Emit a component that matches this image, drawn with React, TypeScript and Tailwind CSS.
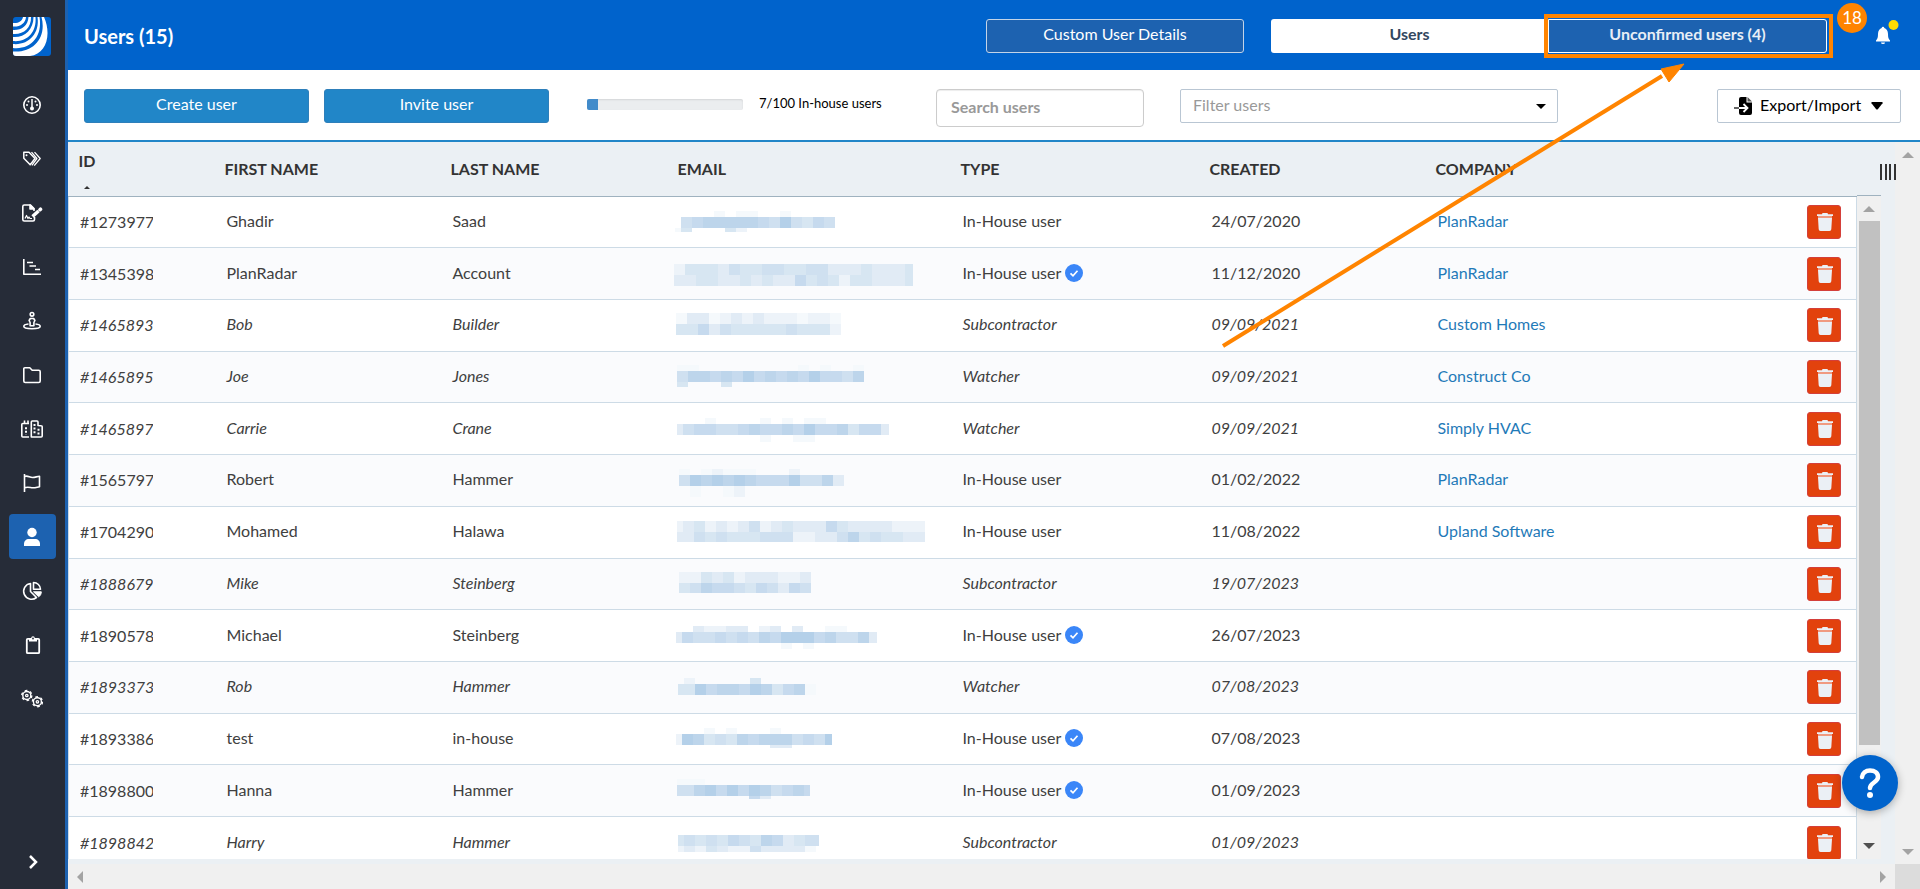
import type { ReactNode } from "react"

interface Strip {
  y: number
  h: number
  cells: string
}

interface Mask {
  x: number
  first: number
  width: number
  strips: Strip[]
}

interface User {
  id: string
  firstName: string
  lastName: string
  type: string
  verified?: boolean
  created: string
  company?: string
  mask: Mask
}

// shades used for the masked email addresses
const shades: Record<string, string> = {
  a: "#f5f9fc",
  b: "#edf3f9",
  c: "#e1ebf5",
  d: "#d7e6f2",
  e: "#cfe0f0",
  f: "#c6daee",
  g: "#bdd5eb",
  h: "#b4d0e9",
}

const mask = (x: number, first: number, width: number, ...rows: [number, number, string][]): Mask => ({
  x,
  first,
  width,
  strips: rows.map(([y, h, cells]) => ({ y, h, cells })),
})

const users: User[] = [
  {
    id: "#1273977", firstName: "Ghadir", lastName: "Saad", type: "In-House user", created: "24/07/2020", company: "PlanRadar",
    mask: mask(1, 6, 160, [14, 6, "....a.aa..a"], [20, 11, ".efgggggfehedfe"], [31, 4, "ad...db"]),
  },
  {
    id: "#1345398", firstName: "PlanRadar", lastName: "Account", type: "In-House user", verified: true, created: "11/12/2020", company: "PlanRadar",
    mask: mask(0, 11, 239, [15, 11, "bdddceddeeddeecccdcccd"], [26, 11, "ccddccdcdccfdedbddcccd"]),
  },
  {
    id: "#1465893", firstName: "Bob", lastName: "Builder", type: "Subcontractor", created: "09/09/2021", company: "Custom Homes",
    mask: mask(2, 11, 165, [13, 11, "accabcbcbbbabba"], [24, 11, "ddfcedddddedddb"]),
  },
  {
    id: "#1465895", firstName: "Joe", lastName: "Jones", type: "Watcher", created: "09/09/2021", company: "Construct Co",
    mask: mask(3, 11, 187, [13, 6, "aa.........a.a..a"], [19, 11, "eggfgfhfgfgfhffeg"], [30, 5, "d...d"]),
  },
  {
    id: "#1465897", firstName: "Carrie", lastName: "Crane", type: "Watcher", created: "09/09/2021", company: "Simply HVAC",
    mask: mask(3, 6, 212, [14, 6, "...a....a.a.aa"], [20, 11, "ceffeefgffgfhffgdffc"], [31, 7, "........a..aa"]),
  },
  {
    id: "#1565797", firstName: "Robert", lastName: "Hammer", type: "In-House user", created: "01/02/2022", company: "PlanRadar",
    mask: mask(5, 11, 165, [14, 6, "a.abaaa...b"], [20, 11, "ehghghgfffheegc"], [31, 11, ".a..ab"]),
  },
  {
    id: "#1704290", firstName: "Mohamed", lastName: "Halawa", type: "In-House user", created: "11/08/2022", company: "Upland Software",
    mask: mask(3, 6, 248, [14, 11, "bcdbcbcebcdcccfdccccbbb"], [25, 10, "ccededddeeebbccegdeddcc"]),
  },
  {
    id: "#1888679", firstName: "Mike", lastName: "Steinberg", type: "Subcontractor", created: "19/07/2023",
    mask: mask(5, 11, 132, [13, 11, "bbdcdbcccbbc"], [24, 10, "degffedfecfe"]),
  },
  {
    id: "#1890578", firstName: "Michael", lastName: "Steinberg", type: "In-House user", verified: true, created: "26/07/2023",
    mask: mask(2, 6, 201, [15, 6, "..cbbcc.bc.c..aa"], [21, 11, "cfeefefegfhhhfgeegc"], [32, 6, "..........a.a"]),
  },
  {
    id: "#1893373", firstName: "Rob", lastName: "Hammer", type: "Watcher", created: "07/08/2023",
    mask: mask(4, 6, 138, [16, 6, ".b.....d"], [22, 11, "ddhfggfhgdfga"]),
  },
  {
    id: "#1893386", firstName: "test", lastName: "in-house", type: "In-House user", verified: true, created: "07/08/2023",
    mask: mask(2, 6, 156, [14, 6, "...a.a...a"], [20, 11, "bhgdedgfgggefeh"], [31, 3, ".........cc"]),
  },
  {
    id: "#1898800", firstName: "Hanna", lastName: "Hammer", type: "In-House user", verified: true, created: "01/09/2023",
    mask: mask(3, 6, 133, [13, 6, "aaa"], [19, 11, "eeghfhfhgefgf"], [30, 3, ".......fc"]),
  },
  {
    id: "#1898842", firstName: "Harry", lastName: "Hammer", type: "Subcontractor", created: "01/09/2023",
    mask: mask(4, 6, 141, [17, 11, "dededfedgfcdee"], [28, 6, "bcbdcbbecccca"]),
  },
]

function MaskedEmail({ mask }: { mask: Mask }) {
  return (
    <svg width={mask.width + mask.x} height="50" className="block" shapeRendering="crispEdges" aria-label="Hidden email">
      {mask.strips.map((strip) =>
        strip.cells.split("").map((c, i) =>
          c === "." ? null : (
            <rect
              key={`${strip.y}-${i}`}
              x={mask.x + (i === 0 ? 0 : mask.first + (i - 1) * 11)}
              y={strip.y}
              width={i === 0 ? mask.first : 11}
              height={strip.h}
              fill={shades[c]}
            />
          ),
        ),
      )}
    </svg>
  )
}

function Logo() {
  return (
    <svg width="38" height="39" viewBox="0 0 38 39" aria-hidden="true">
      <defs>
        <clipPath id="logo-clip">
          <rect width="38" height="39" rx="3" />
        </clipPath>
      </defs>
      <g clipPath="url(#logo-clip)">
        <rect width="38" height="39" fill="#0063cc" />
        <g fill="#fff">
          <path d="M0 6C5 6.500 9 4.500 10 0H13C12.500 6.500 7 10 0 9.500z" />
          <path d="M0 13C8 13.500 15 9 15.500 0H18C18.500 11 10 18 0 17z" />
          <path d="M0 20C11 21 20.500 13 20.500 0H22.500C24 16 13 25.500 0 24z" />
          <path d="M0 27C15 28.500 27 17 24.500 0H26.500C30 20 17 33 0 31z" />
          <path d="M0 34.500C20 36 34 21 28.500 0H31C39 18 33 37 17 39H0z" />
        </g>
      </g>
    </svg>
  )
}

function NavIcon({ children }: { children: ReactNode }) {
  return (
    <svg width="22" height="20" viewBox="0 0 22 20" fill="none" stroke="#fff" strokeWidth="1.600" strokeLinejoin="round" aria-hidden="true">
      {children}
    </svg>
  )
}

const navItems: { label: string; icon: ReactNode; active?: boolean }[] = [
  {
    label: "Dashboard",
    icon: (
      <>
        <circle cx="11" cy="10" r="8.200" />
        <path d="M11 4v8" strokeWidth="1.500" />
        <circle cx="11" cy="13.500" r="2" fill="#fff" stroke="none" />
        <g fill="#fff" stroke="none">
          <circle cx="7.500" cy="6.500" r="1" />
          <circle cx="14.500" cy="6.500" r="1" />
          <circle cx="6" cy="10" r="1" />
          <circle cx="16" cy="10" r="1" />
        </g>
      </>
    ),
  },
  {
    label: "Tickets",
    icon: (
      <>
        <path d="M2.800 3.300h5.200l6 6.200-4.800 6.300-6.400-6.500z" strokeWidth="1.500" />
        <path d="M10.500 3.100l5.400 6.400-5 6.900M13.500 3.100l5.700 6.400-6 7.200" strokeWidth="1.300" />
        <circle cx="5.500" cy="6.200" r="1" fill="#fff" stroke="none" />
      </>
    ),
  },
  {
    label: "Forms",
    icon: (
      <>
        <path d="M13.500 14v2.500a1.500 1.500 0 0 1-1.500 1.500H3.300a1.500 1.500 0 0 1-1.500-1.500v-13A1.500 1.500 0 0 1 3.300 2H9.500l3.500 3.500V8" />
        <path d="M9 2v4h4z" fill="#fff" />
        <path d="M4 15.500l1.500-3 1.500 3 1-1.500 1 1.500h2" strokeWidth="1.200" />
        <path d="M11.500 13.500l6-5.500" strokeWidth="3.400" />
        <path d="M19 6.700l.5-.5" strokeWidth="3.600" strokeLinecap="round" />
      </>
    ),
  },
  {
    label: "Schedule",
    icon: (
      <path d="M2.800 2v15.200h17.200M6 5.500h6M8.500 9h6.500M14 12.500h5" />
    ),
  },
  {
    label: "Site view",
    icon: (
      <>
        <circle cx="11" cy="3.300" r="1.800" />
        <path d="M9.300 7.500h3.400l1.200 2-1 2v3.300H9.100v-3.300l-1-2z" />
        <path d="M7.500 13C4.500 13.300 2.800 14.200 2.800 15.300c0 1.500 3.700 2.400 8.200 2.400s8.200-.9 8.200-2.400c0-1.100-1.700-2-4.700-2.300" />
      </>
    ),
  },
  {
    label: "Documents",
    icon: (
      <path d="M2.800 3.800a1 1 0 0 1 1-1h5l2.400 2.400h6.500a1.500 1.500 0 0 1 1.500 1.500v9.300a1.500 1.500 0 0 1-1.500 1.500H4.300a1.500 1.500 0 0 1-1.500-1.500z" />
    ),
  },
  {
    label: "Projects",
    icon: (
      <>
        <path d="M8 4.500H1.800a1 1 0 0 0-1 1v11.500a1 1 0 0 0 1 1H8M3.500 5V1.500M7 5V1.500" />
        <path d="M10.300 18V3a1 1 0 0 1 1-1h4.700a1 1 0 0 1 1 1v3.500l3.200.3a1 1 0 0 1 1 1v9.200a1 1 0 0 1-1 1z" />
        <path d="M5 8.200v7.500M13.500 5v10.700M17.500 9.800v6" strokeWidth="2" strokeDasharray="2 1.600" />
      </>
    ),
  },
  {
    label: "Milestones",
    icon: (
      <path d="M3.500 1v18M3.500 3.500c3-1.500 5 1 8 1s4.500-1.200 7-1.200v10.500c-2.500.4-4.500 1.200-7 1s-5-1.300-8 0" />
    ),
  },
  {
    label: "Users",
    active: true,
    icon: (
      <>
        <circle cx="11" cy="5.500" r="4.700" fill="#fff" stroke="none" />
        <path d="M3 19v-2c0-3 2-5 5-5h6c3 0 5 2 5 5v2z" fill="#fff" stroke="none" />
      </>
    ),
  },
  {
    label: "Statistics",
    icon: (
      <>
        <path d="M9.500 2.500A7.900 7.900 0 1 0 15.500 16.500L9.500 10.500z" />
        <path d="M12.500 1.500v6.800h7c0-3.800-3.200-6.800-7-6.800z" />
        <path d="M12.500 10.800h7.800c0 2.200-1 4-2.600 5z" fill="#fff" strokeWidth="1" />
      </>
    ),
  },
  {
    label: "Templates",
    icon: (
      <>
        <rect x="5.800" y="3.800" width="12.400" height="14.400" rx="1" strokeWidth="1.800" />
        <path d="M8 6.500V3h2.200a1.800 1.800 0 0 1 3.600 0H16v3.500z" fill="#fff" stroke="none" />
        <circle cx="12" cy="3.500" r="0.900" fill="#262c38" stroke="none" />
      </>
    ),
  },
  {
    label: "Settings",
    icon: (
      <>
        <circle cx="5.800" cy="6.500" r="4" strokeWidth="1.400" />
        <circle cx="5.800" cy="6.500" r="5" strokeWidth="1.400" strokeDasharray="2.600 2.630" />
        <circle cx="5.800" cy="6.500" r="1.200" strokeWidth="1.300" />
        <circle cx="16.400" cy="12.800" r="4" strokeWidth="1.400" />
        <circle cx="16.400" cy="12.800" r="5" strokeWidth="1.400" strokeDasharray="2.600 2.630" />
        <circle cx="16.400" cy="12.800" r="1.200" strokeWidth="1.300" />
      </>
    ),
  },
]

function Sidebar() {
  return (
    <nav className="flex w-[68px] shrink-0 flex-col items-center border-r-[3px] border-[#1d62b0] bg-[#262c38] pt-[17px] pb-3">
      <a href="#home" aria-label="Home" className="mr-[2px] mb-[26px]">
        <Logo />
      </a>
      <div className="flex flex-col gap-[9px]">
        {navItems.map((item) => (
          <a
            key={item.label}
            href={`#${item.label}`}
            aria-label={item.label}
            className={`flex h-[45px] w-[47px] items-center justify-center rounded-[4px] pr-[2px] ${item.active ? "bg-[#1d62b0]" : ""}`}
          >
            <NavIcon>{item.icon}</NavIcon>
          </a>
        ))}
      </div>
      <button type="button" aria-label="Expand menu" className="mt-auto flex h-[30px] w-[47px] items-center justify-center">
        <svg width="10" height="16" viewBox="0 0 10 16" fill="none" stroke="#fff" strokeWidth="2.500">
          <path d="M2 2l6 6-6 6" />
        </svg>
      </button>
    </nav>
  )
}

function Header() {
  return (
    <header className="flex h-[70px] shrink-0 items-start bg-[#0063cc] pt-[19px] pr-[21px] pl-4 text-white">
      <h1 className="text-[20px] leading-[34px] font-bold">Users (15)</h1>
      <button type="button" className="ml-auto h-[34px] w-[258px] rounded-[3px] border border-[#c3d4e8] bg-[#1d62b0] pb-1">
        Custom User Details
      </button>
      <div className="ml-[27px] flex">
        <button type="button" className="h-[34px] w-[277px] rounded-l-[3px] bg-white pb-1 font-bold text-[#33475f]">
          Users
        </button>
        <div className="relative">
          <button type="button" className="h-[34px] w-[279px] rounded-r-[3px] border border-white bg-[#1d62b0] pb-1 font-bold text-[#e8eef6]">
            Unconfirmed users (4)
          </button>
          <div className="pointer-events-none absolute -inset-y-[5px] -right-[6px] -left-1 border-4 border-[#ff8400]" />
        </div>
      </div>
      <span className="-mt-4 ml-[10px] flex size-[30px] items-center justify-center rounded-full bg-[#ff8400] text-[17px]">18</span>
      <button type="button" aria-label="Notifications" className="mt-[1px] ml-2">
        <svg width="24" height="26" viewBox="0 0 24 26" fill="none">
          <path d="M1 20.500c1.500-1.700 2-3 2-6.500 0-3.500 1.700-5.500 3.700-6a1.300 1.300 0 0 1 2.600 0c2 .5 3.700 2.500 3.700 6 0 3.500.5 4.800 2 6.500v1H1z" fill="#fff" />
          <path d="M6 22.500h4a2 1.500 0 0 1-4 0z" fill="#fff" />
          <circle cx="18.500" cy="5" r="5" fill="#ffdc00" />
        </svg>
      </button>
    </header>
  )
}

function Toolbar() {
  return (
    <div className="flex h-[72px] shrink-0 items-start border-b-2 border-[#2186c8] bg-white pt-[19px] pr-[19px] pl-4">
      <button type="button" className="h-[34px] w-[225px] rounded-[3px] border border-[#2e7fba] bg-[#2186c8] pb-1 text-white">
        Create user
      </button>
      <button type="button" className="ml-[15px] h-[34px] w-[225px] rounded-[3px] border border-[#2e7fba] bg-[#2186c8] pb-1 text-white">
        Invite user
      </button>
      <div className="mt-[10px] ml-[38px] h-[11px] w-[156px] overflow-hidden rounded-[2px] bg-[#ebedef] shadow-[inset_0_1px_2px_rgba(0,0,0,0.1)]">
        <div className="h-full bg-[#428bca]" style={{ width: "7%" }} />
      </div>
      <span className="mt-1 ml-4 w-[177px] text-[13px] leading-5 text-black">7/100 In-house users</span>
      <input
        type="text"
        aria-label="Search users"
        placeholder="Search users"
        className="h-[38px] w-[208px] rounded-[4px] border border-[#ccc] bg-white px-[14px] pb-1 font-bold shadow-[inset_0_1px_1px_rgba(0,0,0,0.075)] placeholder:text-[#999]"
      />
      <div className="relative ml-9">
        <select aria-label="Filter users" className="h-[34px] w-[378px] appearance-none rounded-[2px] border border-[#b9c6d3] bg-white pr-8 pb-[2px] pl-3 text-[#999]">
          <option>Filter users</option>
        </select>
        <svg width="10" height="5" viewBox="0 0 10 5" className="pointer-events-none absolute top-[15px] right-3">
          <path d="M0 0h10L5 5z" fill="#000" />
        </svg>
      </div>
      <button type="button" className="ml-auto flex h-[34px] w-[184px] items-center rounded-[2px] border border-[#b9c6d3] bg-white pl-4 text-black">
        <svg width="19" height="20" viewBox="0 0 19 20" aria-hidden="true">
          <path d="M7 1h5.500v5.500H18V17a2 2 0 0 1-2 2H7a2 2 0 0 1-2-2V3a2 2 0 0 1 2-2z" fill="#000" />
          <path d="M13.500 1L18 5.500h-4.500z" fill="#555" />
          <path d="M0 12h5" stroke="#333" strokeWidth="1.500" />
          <path d="M5 12h8M9.500 8l4 4-4 4" fill="none" stroke="#fff" strokeWidth="1.800" />
        </svg>
        <span className="mr-[10px] ml-[7px] pb-[2px]">Export/Import</span>
        <svg width="12" height="8" viewBox="0 0 12 8" aria-hidden="true">
          <path d="M1 0h10q1 0 .5 1.200L7 7q-1 1-2 0L.5 1.200Q0 0 1 0z" fill="#000" />
        </svg>
      </button>
    </div>
  )
}

function VerifiedBadge() {
  return (
    <svg width="18" height="18" viewBox="0 0 18 18" className="ml-1 shrink-0" aria-label="Verified">
      <circle cx="9" cy="9" r="9" fill="#3a86f8" />
      <path d="M5.500 9.300l2.500 2.500 4.500-5" fill="none" stroke="#fff" strokeWidth="1.700" />
    </svg>
  )
}

function TrashIcon() {
  return (
    <svg width="16" height="18" viewBox="0 0 16 18" aria-hidden="true">
      <path d="M0 1.200h5L5.500 0h5l.5 1.200h5V3H0z" fill="#ebf0f5" />
      <path d="M1 3h14v2H1z" fill="#f09a80" />
      <path d="M1 5h14l-.7 11.200Q14.200 18 12.500 18h-9q-1.700 0-1.800-1.800z" fill="#ebf0f5" />
    </svg>
  )
}

function UserRow({ user }: { user: User }) {
  const italic = user.type !== "In-House user"
  return (
    <tr className={`border-b border-[#cddbe6] odd:bg-white even:bg-[#fafbfd] ${italic ? "italic" : ""}`}>
      <td className="pb-[2px] pl-[11px]">
        <span className="inline-block w-[73px] overflow-hidden align-middle">{user.id}</span>
      </td>
      <td className="pb-[2px] pl-[2px]">{user.firstName}</td>
      <td className="pb-[2px] pl-[2px]">{user.lastName}</td>
      <td>
        <MaskedEmail mask={user.mask} />
      </td>
      <td className="pb-[2px] pl-[2px]">
        <div className="flex items-center">
          {user.type}
          {user.verified && <VerifiedBadge />}
        </div>
      </td>
      <td className="pb-[2px] pl-[2px]">{user.created}</td>
      <td className="pb-[2px] pl-[2px]">
        {user.company && (
          <a href="#company" className="text-[#1f7ab8] not-italic">
            {user.company}
          </a>
        )}
      </td>
      <td className="pr-[15px]">
        <button
          type="button"
          aria-label={`Delete ${user.firstName}`}
          className="ml-auto flex size-[34px] items-center justify-center rounded-[3px] border border-[#d43f3a] bg-[#e2420d] pt-[1px] pl-[2px]"
        >
          <TrashIcon />
        </button>
      </td>
    </tr>
  )
}

function UsersTable() {
  return (
    <div className="min-w-0 flex-1 overflow-hidden bg-[#ebf0f4]">
      <table className="h-[727px] w-full table-fixed border-collapse text-left text-[#404040]">
        <colgroup>
          <col className="w-[156px]" />
          <col className="w-[226px]" />
          <col className="w-[223px]" />
          <col className="w-[287px]" />
          <col className="w-[249px]" />
          <col className="w-[226px]" />
          <col className="w-[240px]" />
          <col />
        </colgroup>
        <thead>
          <tr className="h-[54px] border-b border-[#9fb2bf] text-[#333]">
            <th className="pt-2 pl-[10px] align-top leading-[22px]">
              ID
              <svg width="6" height="3" viewBox="0 0 6 3" className="mt-[14px] ml-[5px] block">
                <path d="M0 3h6L3 0z" fill="#333" />
              </svg>
            </th>
            <th>FIRST NAME</th>
            <th>LAST NAME</th>
            <th className="pl-1">EMAIL</th>
            <th>TYPE</th>
            <th>CREATED</th>
            <th>COMPANY</th>
            <th aria-label="Actions" />
          </tr>
        </thead>
        <tbody className="border-r border-l border-[#cddbe6]">
          {users.map((user) => (
            <UserRow key={user.id} user={user} />
          ))}
        </tbody>
      </table>
    </div>
  )
}

function Arrow({ dir, dark }: { dir: "up" | "down" | "left" | "right"; dark?: boolean }) {
  const paths = {
    up: "M0 9L6 3l6 6z",
    down: "M0 3h12L6 9z",
    left: "M9 0v12L3 6z",
    right: "M3 0v12l6-6z",
  }
  return (
    <svg width="12" height="12" viewBox="0 0 12 12" aria-hidden="true">
      <path d={paths[dir]} fill={dark ? "#505050" : "#a3a3a3"} />
    </svg>
  )
}

function ColumnsButton() {
  return (
    <button type="button" aria-label="Choose columns" className="absolute top-[22px] right-6">
      <svg width="16" height="16" viewBox="0 0 16 16" fill="#333">
        <path d="M0 0h2v16H0zM5 0h2v16H5zM9 0h2v16H9zM14 0h2v16h-2z" />
      </svg>
    </button>
  )
}

export default function App() {
  return (
    <div className="flex h-screen overflow-hidden bg-white font-['Lato','Liberation_Sans',sans-serif] text-[16px] leading-5">
      <Sidebar />
      <main className="relative flex min-w-0 flex-1 flex-col">
        <Header />
        <Toolbar />
        <div className="flex min-h-0 flex-1">
          <div className="flex min-w-0 flex-1 flex-col">
            <div className="flex min-h-0 flex-1 bg-[#ebf0f4] pr-[14px] pb-[5px]">
              <UsersTable />
              <div className="flex w-6 flex-col">
                <div className="h-[54px] shrink-0 border-b border-[#9fb2bf]" />
                <div className="flex flex-1 flex-col items-center bg-[#f0f0f0] pt-[7px] pb-[7px]">
                  <Arrow dir="up" />
                  <div className="mt-[6px] mb-auto h-[524px] w-[21px] bg-[#c1c1c1]" />
                  <Arrow dir="down" dark />
                </div>
              </div>
            </div>
            <div className="flex h-[25px] shrink-0 items-center justify-between bg-[#f0f0f0] px-[6px]">
              <Arrow dir="left" />
              <Arrow dir="right" />
            </div>
          </div>
          <div className="relative flex w-[25px] shrink-0 flex-col items-center bg-[#f0f0f0] pt-[7px]">
            <Arrow dir="up" />
            <div className="mt-auto mb-[6px]">
              <Arrow dir="down" />
            </div>
            <div className="h-[25px] w-full bg-[#dcdcdc]" />
            <ColumnsButton />
          </div>
        </div>
        {/* callout arrow */}
        <svg width="480" height="300" viewBox="0 0 480 300" className="pointer-events-none absolute top-[56px] right-[226px]" aria-hidden="true">
          <path d="M9 290L448 20" stroke="#ff8400" strokeWidth="4" />
          <path d="M470 8L447 13l8 13z" fill="#ff8400" stroke="#ff8400" />
        </svg>
        <button
          type="button"
          aria-label="Help"
          className="absolute right-[22px] bottom-[78px] flex size-14 items-center justify-center rounded-full bg-[#0063cc] shadow-[0_2px_8px_rgba(0,0,0,0.3)]"
        >
          <svg width="22" height="30" viewBox="0 0 22 30" fill="none" aria-hidden="true">
            <path d="M3 9c.5-4 3.700-6.500 8-6.500 4.800 0 8 2.600 8 6.500 0 5.500-8 5.500-8 11" stroke="#fff" strokeWidth="4.500" strokeLinecap="round" />
            <circle cx="11" cy="27" r="3" fill="#fff" />
          </svg>
        </button>
      </main>
    </div>
  )
}
